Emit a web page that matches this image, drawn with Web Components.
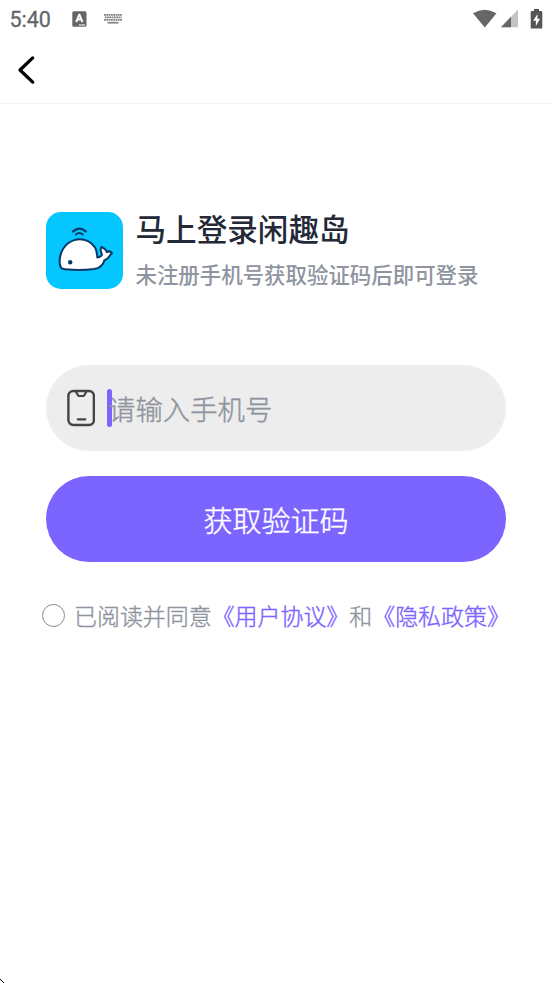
<!DOCTYPE html>
<html lang="zh-CN">
<head>
<meta charset="utf-8">
<title>登录</title>
<style>
html,body{margin:0;height:100%;background:#fff;overflow:hidden}
body{font-family:"Noto Sans CJK SC",sans-serif}
</style>
</head>
<body>
<login-page></login-page>
<script>
const define = (name, html) => {
  const t = document.createElement('template');
  t.innerHTML = html;
  customElements.define(name, class extends HTMLElement {
    constructor() {
      super();
      this.attachShadow({mode: 'open'}).append(t.content.cloneNode(true));
    }
  });
};

define('status-bar', `
<style>
:host{display:flex;height:36px;align-items:center;box-sizing:border-box;padding:1px 9px 0 9.500px;font:400 21.5px/36px Roboto,sans-serif;color:#666}
svg{display:block;flex:none}
.kind{margin-left:20.500px}.keys{margin-left:17px}.wifi{margin-left:auto}.cell{margin-left:4px}.bat{margin-left:12px}
time{width:42px;padding-top:2px;-webkit-text-stroke:.3px #666}
</style>
<time>5:40</time>
<svg class="kind" width="15" height="16" viewBox="0 0 15 16"><rect x=".3" y=".2" width="14.2" height="15.6" rx="1.6" fill="#666"/><path d="M4.200 11.200 7.200 3.700H7.500L10.500 11.200M5.400 8.600h4" fill="none" stroke="#fff" stroke-width="2"/><path d="M7.2 13.3h1.4v1.4H7.2zM9.3 13.3h1.4v1.4H9.3zM11.4 13.3h1.4v1.4h-1.4z" fill="#fff"/></svg>
<svg class="keys" width="18" height="12" viewBox="0 0 18 12" fill="none" stroke="#808080"><path d="M0 1.900h18M0 6.900h18" stroke-width="1.900" stroke-dasharray="1.800 .5"/><path d="M.7 4.400h17" stroke-width="1.900" stroke-dasharray="1.800 .5"/><path d="M3.500 9.700h11" stroke-width="1.700"/></svg>
<svg class="wifi" width="24" height="20" viewBox="0 0 24 20"><path d="M0 4.3Q11.7-3 23.5 4.3L11.8 18.6Z" fill="#666"/></svg>
<svg class="cell" width="17" height="19" viewBox="0 0 17 19"><path d="M17 .5V18.3H0Z" fill="#c3c3c3"/><path d="M10 7.8V18.3H0Z" fill="#666"/></svg>
<svg class="bat" width="13" height="20" viewBox="0 0 13 20"><path d="M4 0h5v2h2.2q1.1 0 1.1 1.2v15.2q0 1.2-1.1 1.2H1.8Q.7 19.600.7 18.400V3.200Q.7 2 1.8 2H4Z" fill="#555"/><path d="M7.5 4.900 3.200 11.800H5.900V17L10 9.800H7.500Z" fill="#fff"/></svg>
`);

define('nav-bar', `
<style>
:host{display:flex;align-items:center;height:68px;box-sizing:border-box;padding-left:17px;border-bottom:1px solid #f1f1f1}
button{all:unset;display:block}svg{display:block}
</style>
<button aria-label="返回"><svg width="19" height="30" viewBox="0 0 19 30"><path d="M15.700 2.900 3 15 15.700 27.100" fill="none" stroke="#000" stroke-width="3.300" stroke-linecap="round" stroke-linejoin="round"/></svg></button>
`);

define('whale-logo', `
<style>:host{display:block;width:77px;height:77px;border-radius:15px;background:#06c6ff}svg{display:block}</style>
<svg width="77" height="77" viewBox="0 0 77 77" fill="none" stroke="#043a68" stroke-width="2" stroke-linecap="round" stroke-linejoin="round">
<path d="M26.800 19.600Q33.300 13.700 39.700 19.400" stroke-width="2.200"/><path d="M29.900 22.500Q33.300 19.400 36.700 22.400" stroke-width="2"/>
<path d="M14.800 55.300C12.500 50.800 13.800 42 17.300 36.500 22.600 28.400 33 24.600 42 29.200 48.300 32.400 51.300 38.200 51.300 45.600 54.500 44.800 56.700 43.700 55.600 41.500 54.300 38.400 54.500 36.500 55.300 35 58.400 36.300 60.400 37.200 60.700 40 62.600 39 64.600 39.200 66 41.200 63.600 42.600 63.200 47.200 58.400 48.200 57.300 52.600 53.700 56.200 48 57.100 39.600 58.200 28.500 58.300 18.800 57.300 16.900 57.100 15.400 56.500 14.800 55.300Z" fill="#fff"/>
<circle cx="24.200" cy="50.300" r="2.200" fill="#043a68" stroke="none"/></svg>
`);

define('brand-header', `
<style>
:host{display:flex;gap:12.500px;align-items:flex-start;height:77px}
h1{margin:-3px 0 0;font-size:30.600px;line-height:38px;font-weight:500;color:#242938;white-space:nowrap}
p{margin:9px 0 0;font-size:21.450px;line-height:36px;font-weight:500;color:#8f94a0;white-space:nowrap}
</style>
<whale-logo></whale-logo>
<div><h1><slot name="title"></slot></h1><p><slot></slot></p></div>
`);

define('phone-field', `
<style>
:host{display:flex;align-items:center;height:86px;box-sizing:border-box;padding:0 0 1px 21px;border-radius:43px;background:#ededed;font-size:27.400px;line-height:40px;font-weight:300;-webkit-text-stroke:.4px;color:#8f949e}
svg{display:block}
.text{display:flex;align-items:center;margin-left:12px}
i{width:5px;height:38px;border-radius:2.500px;background:#7c64ff;margin-right:-4px}
</style>
<svg width="28" height="38" viewBox="0 0 28 38" fill="none" stroke="#444" stroke-width="2.400" stroke-linecap="round" stroke-linejoin="round"><rect x="1.400" y="2" width="25.500" height="34" rx="5"/><path d="M8.800 2.500 11 6.300q.4.700 1.200.700h3.900q.8 0 1.200-.7L19.500 2.500M10.800 30.300h7.500" stroke-width="2.200"/></svg>
<div class="text"><i></i><span><slot></slot></span></div>
`);

define('primary-button', `
<style>
:host{display:block}
button{all:unset;display:flex;width:100%;height:86px;align-items:center;justify-content:center;border-radius:43px;background:#7c64ff;color:#fff;font-size:29px;line-height:40px;font-weight:300;-webkit-text-stroke:.4px}
</style>
<button><span><slot></slot></span></button>
`);

define('terms-row', `
<style>
:host{display:flex;align-items:center;font-size:22.950px;line-height:36px;font-weight:300;-webkit-text-stroke:.4px;color:#8f949e;white-space:nowrap}
i{flex:none;box-sizing:border-box;width:23px;height:23px;border:1.200px solid #888;border-radius:50%;margin-right:9px}
span{margin-top:-1px}
::slotted(a){color:#7c64ff}
</style>
<i></i><span><slot></slot></span>
`);

define('login-page', `
<style>
:host{display:flex;flex-direction:column;height:983px;background:#fff}
main{display:flex;flex-direction:column;padding:108px 46px 0;flex:1}
phone-field{margin-top:76.400px}
primary-button{margin-top:24.600px}
terms-row{margin:36px 0 0 -4px}
footer svg{display:block}
</style>
<status-bar></status-bar>
<nav-bar></nav-bar>
<main>
<brand-header><span slot="title">马上登录闲趣岛</span>未注册手机号获取验证码后即可登录</brand-header>
<phone-field>请输入手机号</phone-field>
<primary-button>获取验证码</primary-button>
<terms-row>已阅读并同意<a>《用户协议》</a>和<a>《隐私政策》</a></terms-row>
</main>
<footer><svg width="5" height="4" viewBox="0 0 5 4"><path d="M0 0h1v1H0zM1 1h1v1H1zM2 2h1v1H2zM3 3h1v1H3z"/></svg></footer>
`);
</script>
</body>
</html>
